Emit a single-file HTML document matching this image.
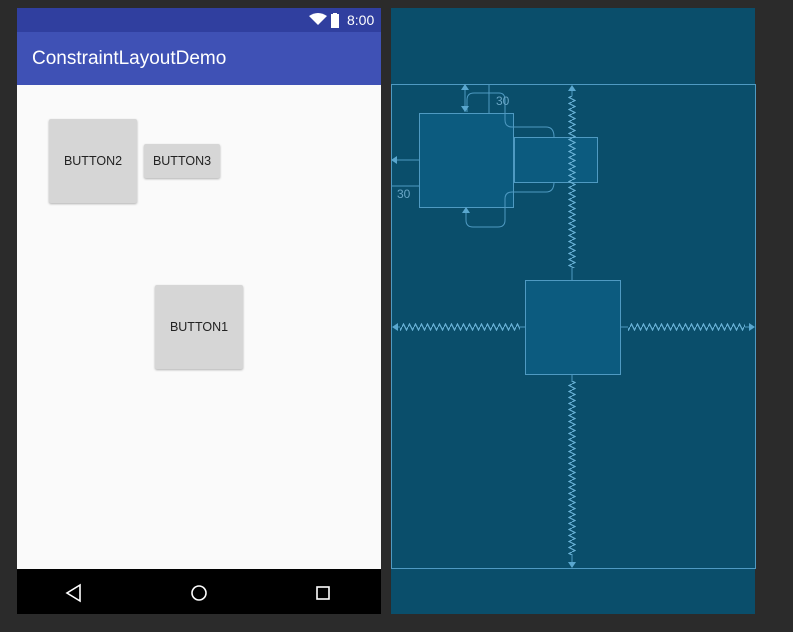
<!DOCTYPE html>
<html><head><style>
body{margin:0;width:793px;height:632px;background:#2b2b2b;position:relative;overflow:hidden;font-family:"Liberation Sans",sans-serif}
.ph{position:absolute;left:17px;top:8px;width:364px;height:606px;background:#fafafa}
.sb{position:absolute;left:0;top:0;width:364px;height:24px;background:#303f9f}
.ab{position:absolute;left:0;top:24px;width:364px;height:53px;background:#3f51b5;color:#fff;font-size:19px;line-height:54px;padding-left:15px;box-sizing:border-box}
.nb{position:absolute;left:0;top:561px;width:364px;height:45px;background:#000}
.btn{position:absolute;background:#d6d6d6;box-shadow:0 1px 2px rgba(0,0,0,.3);font-size:12.5px;color:#222;display:flex;align-items:center;justify-content:center;border-radius:2px}
</style></head><body>
<div class="ph">
<div class="sb">
<svg style="position:absolute;left:292px;top:5px" width="60" height="16"><path d="M0 3 Q9 -3 18 3 L9 12Z" fill="#fff"/><rect x="22" y="1" width="8" height="14" fill="#fff"/><rect x="24" y="0" width="4" height="2" fill="#fff"/></svg>
<span style="position:absolute;left:330px;top:4px;color:#fff;font-size:14px">8:00</span>
</div>
<div class="ab">ConstraintLayoutDemo</div>
<div class="btn" style="left:32px;top:111px;width:88px;height:84px">BUTTON2</div>
<div class="btn" style="left:127px;top:136px;width:76px;height:34px">BUTTON3</div>
<div class="btn" style="left:138px;top:277px;width:88px;height:84px">BUTTON1</div>
<div class="nb">
<svg width="364" height="45"><g fill="none" stroke="#fff" stroke-width="1.6"><path d="M63 16 L50 24 L63 32Z"/><circle cx="182" cy="24" r="7"/><rect x="300" y="18" width="12" height="12"/></g></svg>
</div>
</div>
<svg style="position:absolute;left:0;top:0" width="793" height="632">
<defs>
<pattern id="zh" width="6" height="8" patternUnits="userSpaceOnUse" y="323"><polyline points="0,4 1.5,1 4.5,7 6,4" fill="none" stroke="#6ab3d8" stroke-width="1.2"/></pattern>
<pattern id="zv" width="8" height="6" patternUnits="userSpaceOnUse" x="568"><polyline points="4,0 1,1.5 7,4.5 4,6" fill="none" stroke="#6ab3d8" stroke-width="1.2"/></pattern>
</defs>
<rect x="391" y="8" width="364" height="606" fill="#0a4e6b"/>
<g fill="none" stroke="#4f9ac2" stroke-width="1">
<rect x="391.5" y="84.5" width="364" height="484"/>
<rect x="419.5" y="113.5" width="94" height="94" fill="#0c5b7f"/>
<rect x="514.5" y="137.5" width="83" height="45" fill="#0c5b7f"/>
<rect x="525.5" y="280.5" width="95" height="94" fill="#0c5b7f"/>
<path d="M465 88 V112 M489 85 V113 M391 160 H419 M391 186 H419"/>
<path d="M467 112 V100 Q467 93 474 93 H499 Q505 93 505 100 V120 Q505 127 512 127 H546 Q554 127 554 137"/>
<path d="M554 182 Q554 192 546 192 H512 Q505 192 505 199 V220 Q505 227 498 227 H473 Q466 227 466 220 V210"/>
<path d="M572 91 V96 M572 268 V280 M572 375 V381 M572 555 V562 M397 327 H400 M520 327 H525 M620 327 H628 M745 327 H749"/>
</g>
<g fill="#5aa7cf">
<path d="M465 84 L461 90 H469Z M465 112 L461 106 H469Z M391 160 L397 156 V164Z M466 207 L462 213 H470Z M572 85 L568 91 H576Z M572 568 L568 562 H576Z M392 327 L398 323 V331Z M755 327 L749 323 V331Z"/>
</g>
<rect x="568" y="96" width="8" height="172" fill="url(#zv)"/>
<rect x="568" y="381" width="8" height="174" fill="url(#zv)"/>
<rect x="400" y="323" width="120" height="8" fill="url(#zh)"/>
<rect x="628" y="323" width="117" height="8" fill="url(#zh)"/>
<text x="496" y="105" fill="#6aa6c6" font-size="12" font-family="Liberation Sans">30</text>
<text x="397" y="198" fill="#6aa6c6" font-size="12" font-family="Liberation Sans">30</text>
</svg>
</body></html>
